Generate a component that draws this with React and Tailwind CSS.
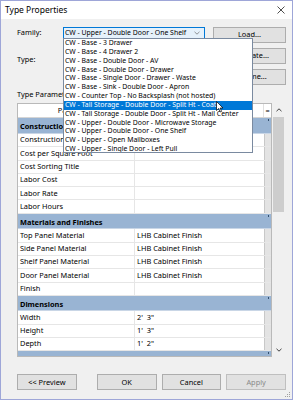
import React from "react";

const familyOptions = [
  "CW - Base - 3 Drawer",
  "CW - Base - 4 Drawer 2",
  "CW - Base - Double Door - AV",
  "CW - Base - Double Door - Drawer",
  "CW - Base - Single Door - Drawer - Waste",
  "CW - Base - Sink - Double Door - Apron",
  "CW - Counter Top - No Backsplash (not hosted)",
  "CW - Tall Storage - Double Door - Split Ht - Coats",
  "CW - Tall Storage - Double Door - Split Ht - Mail Center",
  "CW - Upper - Double Door - Microwave Storage",
  "CW - Upper - Double Door - One Shelf",
  "CW - Upper - Open Mailboxes",
  "CW - Upper - Single Door - Left Pull",
];

const groups = [
  {
    title: "Construction",
    rows: [
      ["Construction", ""],
      ["Cost per Square Foot", ""],
      ["Cost Sorting Title", ""],
      ["Labor Cost", ""],
      ["Labor Rate", ""],
      ["Labor Hours", ""],
    ],
  },
  {
    title: "Materials and Finishes",
    rows: [
      ["Top Panel Material", "LHB Cabinet Finish"],
      ["Side Panel Material", "LHB Cabinet Finish"],
      ["Shelf Panel Material", "LHB Cabinet Finish"],
      ["Door Panel Material", "LHB Cabinet Finish"],
      ["Finish", ""],
    ],
  },
  {
    title: "Dimensions",
    rows: [
      ["Width", "2'  3\""],
      ["Height", "1'  3\""],
      ["Depth", "1'  2\""],
    ],
  },
  { title: "Identity Data", rows: [] },
];

const GroupHeader = ({ title }) => (
  <div className="relative h-[15.6px] shrink-0 bg-[#99b4d3] border-b border-[#c9d6e6] pl-[2px] pt-[4px] font-bold leading-[9px] whitespace-nowrap">
    {title}
    <span className="absolute right-[2px] top-[1px] w-[1px] h-[2px] bg-[#33506f]" />
  </div>
);

const Row = ({ name, value }) => (
  <div className="flex h-[13.3px] shrink-0 bg-white border-b border-[#e6e6e6]">
    <div className="w-[118px] pl-[2px] flex items-center border-r border-[#e6e6e6] leading-none whitespace-nowrap">
      {name}
    </div>
    <div className="w-[130px] pl-[2px] flex items-center leading-none whitespace-pre">
      {value}
    </div>
    <div className="w-[7px] bg-[#e3e3e3] border-l border-[#c8c8c8]" />
  </div>
);

const Button = ({ children, className = "" }) => (
  <div
    className={`flex items-center justify-center h-[16px] border bg-[#e1e1e1] border-[#adadad] leading-none whitespace-nowrap ${className}`}
  >
    {children}
  </div>
);

export default function App() {
  return (
    <div className="relative w-[293px] h-[400px] overflow-hidden bg-[#f0f0f0] border border-[#9ea6d8] font-['Noto_Sans',sans-serif] text-[7.4px] text-black flex flex-col">
      {/* Title bar */}
      <div className="h-[18px] bg-white flex items-center justify-between pl-[4px] pr-[7px] shrink-0">
        <span className="text-[8.5px] leading-none">Type Properties</span>
        <svg width="8" height="8" viewBox="0 0 8 8" className="text-[#222]">
          <path d="M0.5 0.5 L7.5 7.5 M7.5 0.5 L0.5 7.5" stroke="currentColor" strokeWidth="0.8" />
        </svg>
      </div>

      <div className="flex flex-col pl-[16px] pr-[6px]">
        {/* Family / Type + buttons */}
        <div className="flex justify-between mt-[8px]">
          <div className="flex flex-col">
            <div className="flex items-center h-[12px]">
              <span className="w-[46px] leading-none">Family:</span>
              <div className="w-[142px] h-[12px] border border-[#0078d7] bg-[#e5f1fb] flex items-center justify-between pl-[1px] pr-[4px] leading-none whitespace-nowrap text-[6.9px]">
                <span>CW - Upper - Double Door - One Shelf</span>
                <svg width="6" height="4" viewBox="0 0 6 4">
                  <path d="M0.5 0.8 L3 3.2 L5.5 0.8" stroke="#6a6a6a" strokeWidth="0.7" fill="none" />
                </svg>
              </div>
            </div>
            <div className="mt-[17px] leading-none">Type:</div>
          </div>
          <div className="w-[73px] flex flex-col gap-[5px]">
            <Button>Load...</Button>
            <Button>Duplicate...</Button>
            <Button>Rename...</Button>
          </div>
        </div>

        <div className="mt-[6px] leading-none">Type Parameters</div>

        {/* Parameter table + scrollbar */}
        <div className="flex mt-[5px]">
          <div className="w-[255px] h-[254px] border border-[#b9b9b9] bg-white overflow-hidden flex flex-col">
            <div className="flex h-[14px] shrink-0 border-b border-[#d5d5d5] bg-white">
              <div className="w-[118px] flex items-center justify-center border-r border-[#e0e0e0] leading-none">
                Parameter
              </div>
              <div className="w-[130px] flex items-center justify-center border-r border-[#e0e0e0] leading-none">
                Value
              </div>
              <div className="w-[7px] flex items-center justify-center leading-none">=</div>
            </div>
            {groups.map((g) => (
              <React.Fragment key={g.title}>
                <GroupHeader title={g.title} />
                {g.rows.map(([n, v]) => (
                  <Row key={n} name={n} value={v} />
                ))}
              </React.Fragment>
            ))}
          </div>
          <div className="w-[11px] h-[254px] ml-[1px] flex flex-col bg-[#f0f0f0]">
            <div className="h-[14px] flex items-center justify-center">
              <svg width="6" height="4" viewBox="0 0 6 4">
                <path d="M0.5 3.2 L3 0.8 L5.5 3.2" stroke="#404040" strokeWidth="1" fill="none" />
              </svg>
            </div>
            <div className="h-[95px] bg-[#cdcdcd]" />
            <div className="flex-1" />
            <div className="h-[14px] flex items-center justify-center">
              <svg width="6" height="4" viewBox="0 0 6 4">
                <path d="M0.5 0.8 L3 3.2 L5.5 0.8" stroke="#404040" strokeWidth="1" fill="none" />
              </svg>
            </div>
          </div>
        </div>

        {/* Bottom buttons */}
        <div className="flex mt-[17px]">
          <Button className="w-[60px]">&lt;&lt; Preview</Button>
          <Button className="w-[60px] ml-[20px] border-[#0078d7]">OK</Button>
          <Button className="w-[60px] ml-[5px]">Cancel</Button>
          <Button className="w-[60px] ml-[5px] bg-[#cccccc] border-[#bfbfbf] text-[#8a8a8a]">Apply</Button>
        </div>
      </div>

      {/* Resize grip */}
      <svg width="6" height="6" viewBox="0 0 6 6" className="absolute right-[1px] bottom-[1px]">
        <rect x="4" y="0" width="1" height="1" fill="#a0a0a0" />
        <rect x="2" y="2" width="1" height="1" fill="#a0a0a0" />
        <rect x="4" y="2" width="1" height="1" fill="#a0a0a0" />
        <rect x="0" y="4" width="1" height="1" fill="#a0a0a0" />
        <rect x="2" y="4" width="1" height="1" fill="#a0a0a0" />
        <rect x="4" y="4" width="1" height="1" fill="#a0a0a0" />
      </svg>

      {/* Open family drop-down list */}
      <div className="absolute left-[62px] top-[37px] w-[190px] h-[115px] bg-white border border-[#7a8aa0] overflow-hidden text-[6.9px]">
        {familyOptions.map((o, i) => (
          <div
            key={o}
            className={`h-[8.85px] pl-[1px] flex items-center whitespace-nowrap leading-none ${
              i === 7 ? "bg-[#0078d7] text-white" : ""
            }`}
          >
            {o}
          </div>
        ))}
      </div>

      {/* Mouse pointer */}
      <svg width="8" height="12" viewBox="0 0 8 12" className="absolute left-[215px] top-[100px]">
        <path d="M0.5 0.5 L0.5 9.5 L2.7 7.5 L4.2 11 L5.6 10.4 L4.1 7 L7 7 Z" fill="white" stroke="black" strokeWidth="0.7" />
      </svg>
    </div>
  );
}
